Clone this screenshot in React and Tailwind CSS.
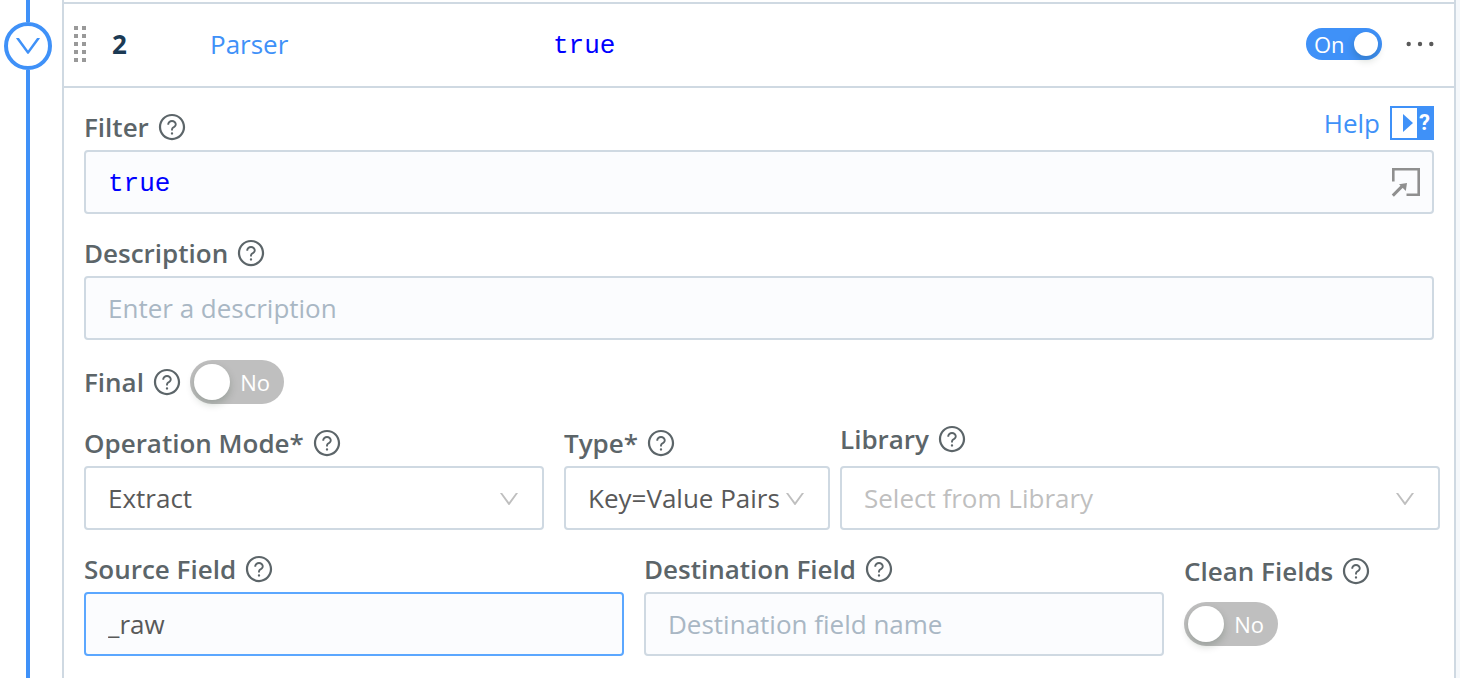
import React, { useState } from 'react';
import { AiOutlineDown, AiOutlineQuestionCircle } from 'react-icons/ai';
import clsx from 'clsx';

/**
 * Shared look of the text boxes and drop-downs.
 */
const fieldClass =
  'block h-16 w-full rounded border-2 border-[#cfd9e2] px-[22px] outline-none focus:border-[#5ba7ff]';

/**
 * Filter expressions are shown as code.
 */
const codeClass = "pt-1 font-['Liberation_Mono',monospace] text-[#0000ff]";

/**
 * Two columns of dots used as the drag handle of a row.
 */
const DragHandle = () => (
  <button type="button" aria-label="Reorder function" className="grid cursor-move grid-cols-2 gap-1">
    {Array.from({ length: 10 }, (_, i) => (
      <span key={i} className="size-1 bg-[#999]" />
    ))}
  </button>
);

/**
 * Field label followed by a help icon.
 */
const FieldLabel = ({ htmlFor, children, className }) => (
  <div className={clsx('flex items-center gap-2', className)}>
    <label htmlFor={htmlFor} className="font-semibold whitespace-nowrap text-[#5c6569]">
      {children}
    </label>
    <button type="button" aria-label={`About ${htmlFor}`} className="text-[#5c6569]">
      <AiOutlineQuestionCircle size={30} />
    </button>
  </div>
);

/**
 * Pill switch with its state written inside.
 */
const Switch = ({ id, label, checked, onChange, small, onText, offText }) => (
  <span
    className={clsx(
      'relative flex shrink-0 items-center justify-between rounded-full p-1 text-[22px] leading-6 text-white',
      small ? 'h-8 w-[76px]' : 'h-11 w-[94px]',
      checked ? 'flex-row-reverse bg-[#3f91f8]' : 'bg-[#bfbfbf]'
    )}
  >
    <input
      id={id}
      type="checkbox"
      role="switch"
      aria-label={label}
      checked={checked}
      onChange={(e) => onChange(e.target.checked)}
      className="absolute inset-0 cursor-pointer opacity-0"
    />
    <span
      className={clsx(
        'rounded-full bg-white shadow-[0_4px_8px_rgba(0,35,11,0.2)]',
        small ? 'size-6' : 'size-9'
      )}
    />
    <span className={small ? 'pl-1' : 'pr-[10px]'}>{checked ? onText : offText}</span>
  </span>
);

/**
 * Drop-down with a thin chevron.
 */
const Select = ({ id, value, onChange, options, placeholder, className }) => (
  <div className="relative">
    <select
      id={id}
      value={value}
      onChange={(e) => onChange(e.target.value)}
      className={clsx(fieldClass, 'appearance-none bg-white', value ? 'text-[#595959]' : 'text-[#bfbfbf]', className)}
    >
      {placeholder && <option value="">{placeholder}</option>}
      {options.map((option) => (
        <option key={option}>{option}</option>
      ))}
    </select>
    <AiOutlineDown size={24} className="pointer-events-none absolute top-[21px] right-[23px] text-[#bfbfbf]" />
  </div>
);

const ExpandIcon = () => (
  <svg width="30" height="30" viewBox="0 0 30 30" fill="none" stroke="#8f8f8f" strokeWidth="2.6">
    <path d="M2.3 14.5V2.3h25.4v25.4H15.5" />
    <path d="M1.8 28.6L12 18.4" strokeWidth="3" />
    <path d="M8 17.2l8-1.2-1.2 8z" fill="#8f8f8f" stroke="none" />
  </svg>
);

const App = () => {
  const [enabled, setEnabled] = useState(true);
  const [filter, setFilter] = useState('true');
  const [description, setDescription] = useState('');
  const [final, setFinal] = useState(false);
  const [mode, setMode] = useState('Extract');
  const [type, setType] = useState('Key=Value Pairs');
  const [library, setLibrary] = useState('');
  const [source, setSource] = useState('_raw');
  const [destination, setDestination] = useState('');
  const [clean, setClean] = useState(false);

  return (
    <div className="flex min-h-screen bg-[#f5f8fb] pr-1 font-['Open_Sans','Noto_Sans',sans-serif] text-[26px] leading-9">
      {/* Pipeline rail */}
      <div className="flex w-[62px] shrink-0 flex-col items-start bg-white">
        <span className="ml-[26px] h-[22px] w-1 bg-[#3f91f8]" />
        <button
          type="button"
          aria-label="Collapse function"
          className="ml-1 flex size-12 items-center justify-center rounded-full border-4 border-[#3f91f8] text-[#3f91f8]"
        >
          <AiOutlineDown size={32} className="shrink-0" />
        </button>
        <span className="ml-[26px] w-1 flex-1 bg-[#3f91f8]" />
      </div>

      <main className="min-w-0 flex-1 border-x-2 border-[#cfd9e2] bg-white pt-[2px]">
        <header className="flex h-[86px] items-center border-y-2 border-[#cfd9e2] pr-5 pb-[2px] pl-[10px]">
          <DragHandle />
          <span className="w-[124px] pl-[26px] font-bold text-[#1b3a54]">2</span>
          <a href="#parser" className="w-[343px] text-[#3f91f8]">
            Parser
          </a>
          <span className={clsx('flex-1', codeClass)}>{filter}</span>
          <Switch
            label="Function enabled"
            checked={enabled}
            onChange={setEnabled}
            small
            onText="On"
            offText="Off"
          />
          <button type="button" aria-label="More actions" className="ml-6">
            <svg width="28" height="6" viewBox="0 0 28 6" fill="#595959">
              <circle cx="2.7" cy="3" r="2.2" />
              <circle cx="14" cy="3" r="2.2" />
              <circle cx="25.3" cy="3" r="2.2" />
            </svg>
          </button>
        </header>

        <form className="px-5 pb-5" onSubmit={(e) => e.preventDefault()}>
          <div className="flex justify-between pt-4">
            <FieldLabel htmlFor="filter" className="h-[46px]">
              Filter
            </FieldLabel>
            <a href="#help" className="flex h-[38px] items-center gap-[10px] text-[#3f91f8]">
              Help
              <span className="flex h-[34px] w-11 border-2 border-[#3f91f8] bg-[#3f91f8]">
                <span className="flex w-[25px] items-center justify-end bg-white pr-1">
                  <svg width="10" height="18" viewBox="0 0 10 18" fill="#3f91f8">
                    <path d="M0 0l10 9-10 9z" />
                  </svg>
                </span>
                <span className="flex-1 text-center font-['Roboto',sans-serif] text-[22px] leading-[30px] font-bold text-white">
                  ?
                </span>
              </span>
            </a>
          </div>
          <div className="relative">
            <input
              id="filter"
              value={filter}
              onChange={(e) => setFilter(e.target.value)}
              className={clsx(fieldClass, codeClass, 'bg-[#fbfcfe]')}
            />
            <button type="button" aria-label="Open editor" className="absolute top-[17px] right-[13px]">
              <ExpandIcon />
            </button>
          </div>

          <FieldLabel htmlFor="description" className="mt-4 h-[46px]">
            Description
          </FieldLabel>
          <input
            id="description"
            value={description}
            onChange={(e) => setDescription(e.target.value)}
            placeholder="Enter a description"
            className={clsx(fieldClass, 'bg-[#fbfcfe] text-[#595959] placeholder:text-[#a9b7c4]')}
          />

          <div className="mt-5 flex items-center gap-2">
            <FieldLabel htmlFor="final">Final</FieldLabel>
            <Switch id="final" checked={final} onChange={setFinal} onText="Yes" offText="No" />
          </div>

          <div className="-mr-[6px] flex pt-4">
            <div className="mr-5 min-w-0 flex-[460]">
              <FieldLabel htmlFor="mode" className="h-[46px]">
                Operation Mode*
              </FieldLabel>
              <Select
                id="mode"
                value={mode}
                onChange={setMode}
                options={['Extract', 'Reserialize', 'Serialize']}
              />
            </div>
            <div className="mr-[10px] min-w-0 flex-[266]">
              <FieldLabel htmlFor="type" className="h-[46px]">
                Type*
              </FieldLabel>
              <Select
                id="type"
                value={type}
                onChange={setType}
                options={['Key=Value Pairs', 'CSV', 'JSON Object']}
                className="pr-0"
              />
            </div>
            <div className="min-w-0 flex-[600]">
              <FieldLabel htmlFor="library" className="h-[46px] pb-2">
                Library
              </FieldLabel>
              <Select
                id="library"
                value={library}
                onChange={setLibrary}
                options={['Apache Common', 'Syslog']}
                placeholder="Select from Library"
              />
            </div>
          </div>

          <div className="grid grid-cols-[540fr_520fr_250fr] gap-5 pt-4">
            <div>
              <FieldLabel htmlFor="source" className="h-[46px]">
                Source Field
              </FieldLabel>
              <input
                id="source"
                value={source}
                onChange={(e) => setSource(e.target.value)}
                className={clsx(fieldClass, 'border-[#5ba7ff]! bg-[#fbfcfe] text-[#595959]')}
              />
            </div>
            <div>
              <FieldLabel htmlFor="destination" className="h-[46px]">
                Destination Field
              </FieldLabel>
              <input
                id="destination"
                value={destination}
                onChange={(e) => setDestination(e.target.value)}
                placeholder="Destination field name"
                className={clsx(fieldClass, 'bg-[#fbfcfe] text-[#595959] placeholder:text-[#a9b7c4]')}
              />
            </div>
            <div>
              <FieldLabel htmlFor="clean" className="mb-[6px] h-[50px]">
                Clean Fields
              </FieldLabel>
              <Switch id="clean" checked={clean} onChange={setClean} onText="Yes" offText="No" />
            </div>
          </div>
        </form>
      </main>
    </div>
  );
};

export default App;
